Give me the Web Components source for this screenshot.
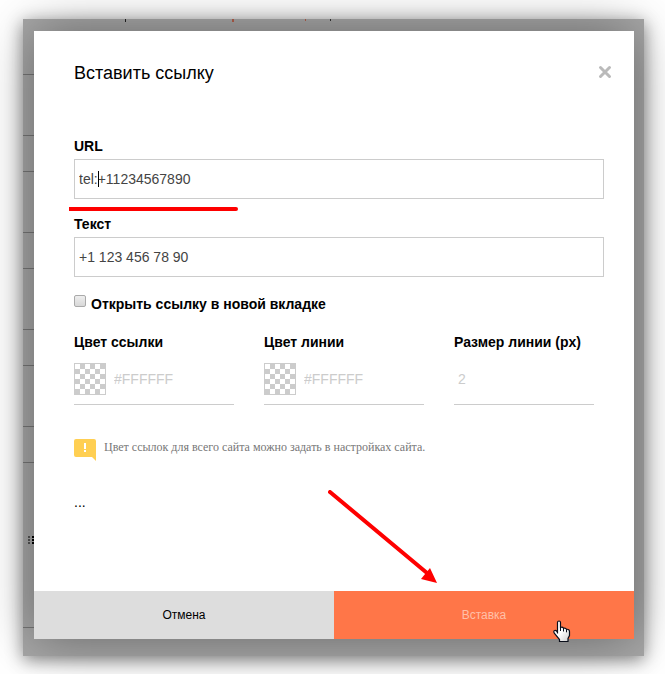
<!DOCTYPE html>
<html lang="ru">
<head>
<meta charset="utf-8">
<meta name="viewport" content="width=device-width">
<title>Вставить ссылку</title>
<style>
	body {
		margin: 0;
		background: #fff;
		font: 14px/18px "Liberation Sans", Arial, sans-serif;
		color: #000;
	}
</style>
</head>
<body>
<page-frame>
	<link-dialog heading="Вставить ссылку">
		<text-field label="URL" value="tel:+11234567890" marked></text-field>
		<text-field label="Текст" value="+1 123 456 78 90"></text-field>
		<check-field>Открыть ссылку в новой вкладке</check-field>
		<field-row>
			<line-field label="Цвет ссылки" placeholder="#FFFFFF" swatch></line-field>
			<line-field label="Цвет линии" placeholder="#FFFFFF" swatch></line-field>
			<line-field label="Размер линии (px)" placeholder="2"></line-field>
		</field-row>
		<hint-note>Цвет ссылок для всего сайта можно задать в настройках сайта.</hint-note>
		<div>...</div>
		<dialog-button slot="actions">Отмена</dialog-button>
		<dialog-button slot="actions" primary>Вставка</dialog-button>
	</link-dialog>
</page-frame>

<script>
const define = (tagName, getHTML) => {
	customElements.define(tagName, class extends HTMLElement {
		constructor() {
			super();

			const template = document.createElement('template');
			template.innerHTML = getHTML(this);
			this.attachShadow({mode: 'open'}).append(template.content.cloneNode(true));
		}
	});
};

const attr = (element, name) => element.getAttribute(name) || '';

// Dimmed page behind the dialog, with the row borders of its list
const rowHeights = [56, 61, 36, 61, 36, 61, 36, 61, 36, 165];

define('page-frame', () => `
	<style>
		:host {
			display: grid;
			margin: 19px 21px 18px 23px;
			background: #a8a8a8;
			box-shadow: 0 4px 16px rgba(0, 0, 0, .45);
		}
		.rows, slot {
			grid-area: 1 / 1;
		}
		.rows {
			overflow: hidden;
			position: relative;
		}
		.rows div {
			box-sizing: border-box;
			width: 50%;
			border-bottom: 1px solid #777;
		}
		.rows svg {
			position: absolute;
			left: 0;
			top: 0;
		}
		slot {
			display: block;
			position: relative;
			padding: 12px 10px 17px 11px;
		}
	</style>
	<div class="rows" aria-hidden="true">
		${rowHeights.map(height => `<div style="height:${height}px"></div>`).join('')}
		<svg width="320" height="540">
			<path d="M102 0h1v3h-1z" fill="#222"/>
			<path d="M209 0h2v3h-2z" fill="#b5604c"/>
			<path d="M5 517h2v2h-2zM5 520h2v2h-2zM5 523h2v2h-2z" fill="#555"/>
			<path d="M9 517h2v2h-2zM9 520h2v2h-2zM9 523h2v2h-2z" fill="#000"/>
			<path d="M282 0h1v2h-1z" fill="#b5604c"/>
			<path d="M307 0h1v2h-1z" fill="#333"/>
		</svg>
	</div>
	<slot></slot>
`);

define('link-dialog', host => `
	<style>
		:host {
			display: block;
			position: relative;
			background: #fff;
			box-shadow: 0 0 50px rgba(0, 0, 0, .4);
		}
		header {
			display: flex;
			justify-content: space-between;
			align-items: flex-start;
			padding: 30px 22px 0 40px;
		}
		h1 {
			margin: 0;
			font-size: 18px;
			line-height: 24px;
			font-weight: normal;
		}
		.close {
			padding: 4px 0 0;
			border: 0;
			background: none;
			line-height: 0;
		}
		.body {
			box-sizing: border-box;
			display: flex;
			flex-direction: column;
			min-height: 506px;
			padding: 52px 30px 0 40px;
		}
		footer {
			display: grid;
			grid-template-columns: 1fr 1fr;
		}
		.arrow {
			position: absolute;
			right: 194px;
			bottom: 53px;
		}
		.pointer {
			position: absolute;
			right: 63px;
			bottom: -4px;
		}
	</style>
	<header>
		<h1>${attr(host, 'heading')}</h1>
		<button class="close" type="button" aria-label="Закрыть">
			<svg width="14" height="14" viewBox="0 0 14 14"><path d="M2.5 2.5l9 9M11.5 2.5l-9 9" stroke="#bababa" stroke-width="3" stroke-linecap="round"/></svg>
		</button>
	</header>
	<div class="body"><slot></slot></div>
	<footer><slot name="actions"></slot></footer>
	<svg class="arrow" width="112" height="96" viewBox="0 0 112 96" aria-hidden="true">
		<path d="M2 2l97 81" stroke="#fe0000" stroke-width="4" stroke-linecap="round"/>
		<path d="M109 93l-16-4 9-11z" fill="#fe0000"/>
	</svg>
	<svg class="pointer" width="18" height="23" viewBox="0 0 18 23" aria-hidden="true">
		<linearGradient id="hand" x2="1" y2="1"><stop offset=".5" stop-color="#fff"/><stop offset="1" stop-color="#ccc"/></linearGradient>
		<path d="M4.5 13.5V2.500Q4.500 1 6 1t1.500 1.500V7.500Q9.700 6.700 10.500 8.300 12.700 7.600 13.500 9.300 16.500 9 16.500 11.500V15.500L15 18.500V21.500H6.500V19.500L1.500 13.500Q0 11 1.700 10.500T4.500 12.500" fill="url(#hand)" stroke="#0a0e1a" stroke-width="1.2"/>
		<path d="M7.500 7v4M10.500 8v3.500M13.500 9.300v3" stroke="#0a0e1a"/>
	</svg>
`);

define('text-field', host => `
	<style>
		:host {
			display: block;
			margin-bottom: 16px;
		}
		label {
			display: block;
			margin-bottom: 4px;
			font-weight: bold;
		}
		.box {
			position: relative;
		}
		input {
			box-sizing: border-box;
			display: block;
			width: 100%;
			height: 40px;
			padding: 0 4px;
			border: 1px solid #ccc;
			background: #fff;
			font: inherit;
			color: #444;
		}
		.caret {
			position: absolute;
			left: 24px;
			top: 12px;
			width: 1px;
			height: 16px;
			background: #000;
		}
		.mark {
			position: absolute;
			left: -5px;
			top: 48px;
			width: 169px;
			height: 4px;
			border-radius: 0 2px 2px 0;
			background: #fe0000;
		}
	</style>
	<label for="field">${attr(host, 'label')}</label>
	<div class="box">
		<input id="field" type="text" value="${attr(host, 'value')}">
		${host.hasAttribute('marked') ? '<i class="caret"></i><i class="mark"></i>' : ''}
	</div>
`);

define('check-field', () => `
	<style>
		:host {
			display: flex;
			align-items: flex-start;
			gap: 5px;
			margin: 2px 0 20px;
			font-weight: bold;
		}
		input {
			appearance: none;
			box-sizing: border-box;
			flex: none;
			width: 12px;
			height: 12px;
			margin: 0;
			border: 1px solid #aaa;
			border-radius: 2px;
			background: linear-gradient(#eee, #d8d8d8);
		}
	</style>
	<input id="check" type="checkbox">
	<label for="check"><slot></slot></label>
`);

define('field-row', () => `
	<style>
		:host {
			display: grid;
			grid-template-columns: 16fr 16fr 14fr;
			gap: 30px;
			padding-right: 10px;
		}
	</style>
	<slot></slot>
`);

define('line-field', host => `
	<style>
		:host {
			display: block;
			min-width: 0;
		}
		label {
			display: block;
			margin-bottom: 12px;
			font-weight: bold;
			white-space: nowrap;
		}
		.line {
			display: flex;
			gap: 4px;
			height: 32px;
			padding-bottom: 9px;
			border-bottom: 1px solid #ccc;
		}
		.swatch {
			flex: none;
			width: 32px;
			height: 32px;
			padding: 0;
			border: 1px solid #ccc;
			background: repeating-conic-gradient(#fff 0 25%, #ccc 0 50%) 5px 0 / 10px 10px;
		}
		input {
			flex: 1;
			min-width: 0;
			padding: 0 4px;
			border: 0;
			background: none;
			font: inherit;
		}
		input::placeholder {
			color: #ccc;
		}
	</style>
	<label for="field">${attr(host, 'label')}</label>
	<div class="line">
		${host.hasAttribute('swatch') ? '<button class="swatch" type="button" aria-label="Палитра"></button>' : ''}
		<input id="field" type="text" placeholder="${attr(host, 'placeholder')}">
	</div>
`);

define('hint-note', () => `
	<style>
		:host {
			display: flex;
			gap: 8px;
			margin: 34px 0 32px;
			font: 12px/16px "Liberation Serif", Georgia, serif;
			color: #777;
		}
		svg {
			flex: none;
		}
	</style>
	<svg width="22" height="22" viewBox="0 0 22 22" aria-hidden="true">
		<path d="M2 0h18q2 0 2 2v20l-4-4H2q-2 0-2-2V2q0-2 2-2z" fill="#ffcf52"/>
		<path d="M10 4h2v6h-2zM10 11h2v2h-2z" fill="#fff"/>
	</svg>
	<span><slot></slot></span>
`);

define('dialog-button', () => `
	<style>
		:host {
			display: block;
		}
		button {
			width: 100%;
			height: 48px;
			padding: 0;
			border: 0;
			background: #ddd;
			font: 12px/16px "Liberation Sans", Arial, sans-serif;
			color: #000;
		}
		:host([primary]) button {
			background: #ff7648;
			color: #ffc0a8;
		}
	</style>
	<button type="button"><slot></slot></button>
`);
</script>
</body>
</html>
